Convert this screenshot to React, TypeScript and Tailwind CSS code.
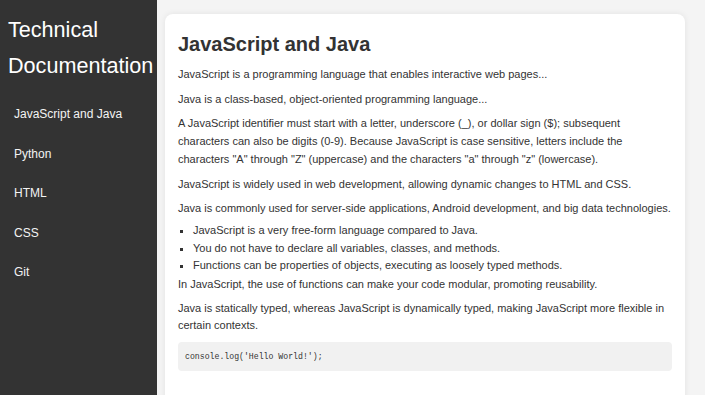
import React from 'react';

const navItems = ['JavaScript and Java', 'Python', 'HTML', 'CSS', 'Git'];

const Para = ({ children }: { children: React.ReactNode }) => (
    <p className="mb-[6.5px]">{children}</p>
);

export default function App() {
    return (
        <div
            className="flex h-[395px] w-[705px] overflow-hidden bg-[#f4f4f4] text-[#333]"
            style={{ fontFamily: '"Liberation Sans", Arial, sans-serif' }}
        >
            <nav className="w-[157px] shrink-0 bg-[#333] text-white">
                <h1 className="pl-2 pt-3 text-[21.6px] leading-[36px] font-normal">Technical Documentation</h1>
                <ul className="mt-[11px]">
                    {navItems.map((item) => (
                        <li key={item}>
                            <a href="#" className="block px-[14px] py-3 text-[12px] leading-[15.6px] text-[#f4f4f4]">
                                {item}
                            </a>
                        </li>
                    ))}
                </ul>
            </nav>

            <main className="flex-1 pl-2 pr-5 pt-[14px]">
                <section className="rounded-lg bg-white px-[13px] pt-[18px] pb-10 shadow-[0_0_6px_rgba(0,0,0,0.08)] text-[11px] leading-[18px]">
                    <h2 className="mb-[9px] text-[20px] leading-6 font-bold">JavaScript and Java</h2>
                    <Para>JavaScript is a programming language that enables interactive web pages...</Para>
                    <Para>Java is a class-based, object-oriented programming language...</Para>
                    <Para>
                        A JavaScript identifier must start with a letter, underscore (_), or dollar sign ($); subsequent
                        characters can also be digits (0-9). Because JavaScript is case sensitive, letters include the
                        characters "A" through "Z" (uppercase) and the characters "a" through "z" (lowercase).
                    </Para>
                    <Para>JavaScript is widely used in web development, allowing dynamic changes to HTML and CSS.</Para>
                    <p className="mb-[5px]">Java is commonly used for server-side applications, Android development, and big data technologies.</p>
                    <ul className="list-[square] pl-[15px] leading-[17.7px]">
                        <li>JavaScript is a very free-form language compared to Java.</li>
                        <li>You do not have to declare all variables, classes, and methods.</li>
                        <li>Functions can be properties of objects, executing as loosely typed methods.</li>
                    </ul>
                    <Para>In JavaScript, the use of functions can make your code modular, promoting reusability.</Para>
                    <p className="mb-[7px] leading-[17.5px]">
                        Java is statically typed, whereas JavaScript is dynamically typed, making JavaScript more flexible in
                        certain contexts.
                    </p>
                    <pre
                        className="rounded bg-[#f1f1f1] px-[7px] py-[9px] text-[8.2px] leading-[10px]"
                        style={{ fontFamily: '"DejaVu Sans Mono", "Liberation Mono", monospace' }}
                    >
                        <code>console.log('Hello World!');</code>
                    </pre>
                </section>
            </main>
        </div>
    );
}
